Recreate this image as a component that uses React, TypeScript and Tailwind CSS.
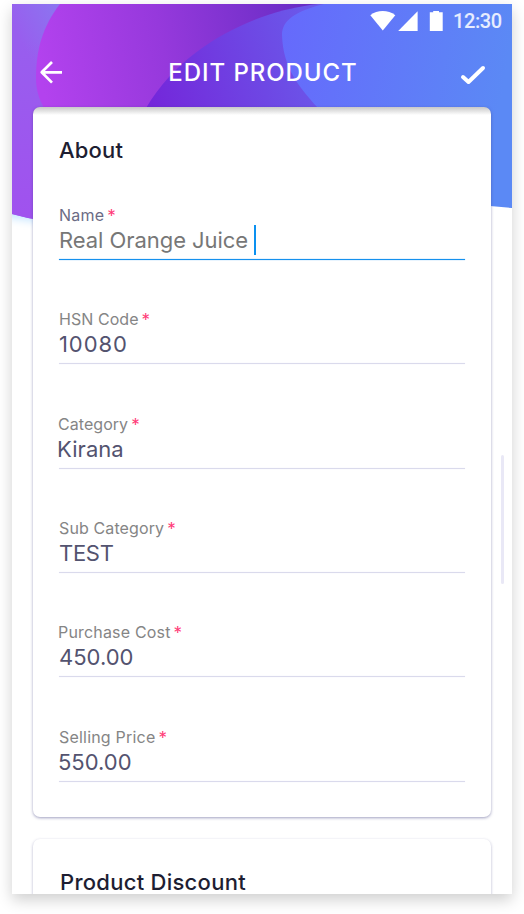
import React from "react";

type Field = {
  label: string;
  value: string;
  labelClass: string;
  valueClass: string;
  active?: boolean;
};

const fields: Field[] = [
  { label: "Name", value: "Real Orange Juice", labelClass: "text-[#6b6b85] tracking-[0.2px]", valueClass: "text-[#777777] tracking-[-0.05px]", active: true },
  { label: "HSN Code", value: "10080", labelClass: "text-[#858585] tracking-[0.05px]", valueClass: "text-[#53536f] tracking-[0.9px]" },
  { label: "Category", value: "Kirana", labelClass: "text-[#858585] -ml-px tracking-[0.05px]", valueClass: "text-[#53536f] -ml-[2px] tracking-[0.05px]" },
  { label: "Sub Category", value: "TEST", labelClass: "text-[#858585] tracking-[0.12px]", valueClass: "text-[#53536f] tracking-[-0.3px]" },
  { label: "Purchase Cost", value: "450.00", labelClass: "text-[#858585] -ml-px tracking-[0.18px]", valueClass: "text-[#53536f]" },
  { label: "Selling Price", value: "550.00", labelClass: "text-[#858585] tracking-[0.2px]", valueClass: "text-[#53536f] -ml-px" },
];

function HeaderArt() {
  return (
    <svg className="absolute left-0 top-0 h-[226px] w-[500px]" viewBox="12 4 500 226" aria-hidden="true">
      <defs>
        <linearGradient id="base" x1="58" y1="10" x2="16" y2="32" gradientUnits="userSpaceOnUse">
          <stop offset="0" stopColor="#8c74f0" />
          <stop offset="1" stopColor="#985eee" />
        </linearGradient>
        <linearGradient id="baseFade" x1="0" y1="40" x2="0" y2="214" gradientUnits="userSpaceOnUse">
          <stop offset="0" stopColor="#a052ee" stopOpacity="0" />
          <stop offset="1" stopColor="#a052ee" />
        </linearGradient>
        <linearGradient id="magenta" x1="38" y1="60" x2="310" y2="10" gradientUnits="userSpaceOnUse">
          <stop offset="0" stopColor="#b342ee" />
          <stop offset="0.45" stopColor="#9639dc" />
          <stop offset="1" stopColor="#672cc4" />
        </linearGradient>
        <linearGradient id="violet" x1="150" y1="108" x2="315" y2="60" gradientUnits="userSpaceOnUse">
          <stop offset="0" stopColor="#7426da" />
          <stop offset="1" stopColor="#6b57e9" />
        </linearGradient>
        <linearGradient id="blue" x1="282" y1="0" x2="512" y2="40" gradientUnits="userSpaceOnUse">
          <stop offset="0" stopColor="#6669fc" />
          <stop offset="1" stopColor="#5b89f5" />
        </linearGradient>
        <filter id="glow" x="-10%" y="-10%" width="120%" height="120%">
          <feGaussianBlur stdDeviation="4" />
        </filter>
      </defs>
      <path d="M0 100H80V226Q40 223 0 216Z" fill="#c5e5ff" filter="url(#glow)" />
      <path d="M12 4H300V220H40Q26 218 12 214Z" fill="url(#base)" />
      <path d="M12 4H300V220H40Q26 218 12 214Z" fill="url(#baseFade)" />
      <path d="M60 4C42 27 36 51 36 78C36 90 39 99 44 108H400V4Z" fill="url(#magenta)" />
      <path d="M146 108C174 61 218 33 262 17C282 10 300 6 318 4H420V108Z" fill="url(#violet)" />
      <path d="M324 4C296 11 282 20 282 35C283 67 298 86 318 108L400 200L490 206L512 208V4Z" fill="url(#blue)" />
    </svg>
  );
}

function StatusBar() {
  return (
    <div className="flex h-[34px] items-center pl-[358px]">
      <svg className="h-[20px] w-[74px] shrink-0" viewBox="370 11 74 20" fill="white" aria-hidden="true">
        <path d="M370.3 15.2C377.5 9.7 388 9.7 395.3 15.2L382.8 30.5Z" />
        <path d="M417.6 11.3V31H398.2Z" />
        <path d="M429.8 12.3H433.2V11H439V12.3H442.7V31H429.8Z" />
      </svg>
      <span className="ml-[9px] font-['Roboto',sans-serif] text-[20px] font-medium leading-[24px] tracking-[-0.4px] text-white/85">12:30</span>
    </div>
  );
}

function TitleBar() {
  return (
    <div className="flex h-[69px] items-start justify-between pl-[27px] pr-[26px]">
      <svg className="mt-[22px] h-[24px] w-[24px]" viewBox="39 60 24 24" fill="none" stroke="white" strokeWidth="2.7" strokeLinejoin="round" aria-label="Back">
        <path d="M62 72.3H42M52 62L41.7 72.3L52 82.6" />
      </svg>
      <h1 className="ml-[3px] mt-[21px] whitespace-nowrap text-[24px] font-medium leading-[28px] tracking-[0.95px] text-white">EDIT PRODUCT</h1>
      <svg className="mt-[26px] h-[22px] w-[26px]" viewBox="460 64 26 22" fill="none" stroke="white" strokeWidth="4" strokeLinejoin="round" strokeLinecap="round" aria-label="Save">
        <path d="M463 77L468.5 82L483 68" />
      </svg>
    </div>
  );
}

function FieldRow({ field }: { field: Field }) {
  return (
    <div className="h-[104.35px]">
      <div className={`flex h-[22px] gap-[3px] whitespace-nowrap text-[16px] leading-[22px] ${field.labelClass}`}>
        <span>{field.label}</span>
        <span className="pt-px text-[17px] text-[#ff3b78]">*</span>
      </div>
      <div className="flex h-[33px]">
        <span className={`whitespace-nowrap text-[22px] leading-[28px] ${field.valueClass}`}>{field.value}</span>
        {field.active && <span className="-mt-px ml-[6px] h-[30px] w-[1.5px] bg-[#0c91f0]" />}
      </div>
      <div className={`h-px ${field.active ? "bg-[#1591ee] shadow-[0_0_1px_#1591ee]" : "bg-[#dadaec] shadow-[0_0_1px_#dedeee]"}`} />
    </div>
  );
}

export default function App() {
  return (
    <div className="h-[914px] w-[524px] overflow-hidden bg-white pl-[12px] pt-[4px] font-['Inter','Liberation_Sans',sans-serif]">
      <div className="h-[890px] w-[500px] shadow-[0_6px_14px_rgba(0,0,0,0.19)]">
        <main className="relative h-[890px] overflow-hidden bg-white">
          <HeaderArt />
          <div className="relative flex flex-col">
            <StatusBar />
            <TitleBar />
            <section className="ml-[21px] h-[710px] w-[458px] rounded-[7px] bg-white bg-linear-to-b from-[#c8c8c8] to-white to-[8px] px-[26px] pt-[29px] shadow-[0_1px_3px_rgba(65,65,130,0.5)]">
              <h2 className="text-[22px] font-medium leading-[28px] tracking-[0.2px] text-[#1e1e32]">About</h2>
              <div className="mt-[40px]">
                {fields.map((field) => <FieldRow key={field.label} field={field} />)}
              </div>
            </section>
            <section className="ml-[21px] mt-[22px] h-[100px] w-[458px] rounded-[7px] bg-white px-[27px] pt-[32px] shadow-[0_1px_3px_rgba(65,65,130,0.4)]">
              <h2 className="text-[22px] font-medium leading-[23px] tracking-[0.27px] text-[#1e1e32]">Product Discount</h2>
            </section>
          </div>
          <div className="absolute left-[489px] top-[451px] h-[129px] w-[3px] rounded-full bg-[#e9e8f6]" />
        </main>
      </div>
    </div>
  );
}
